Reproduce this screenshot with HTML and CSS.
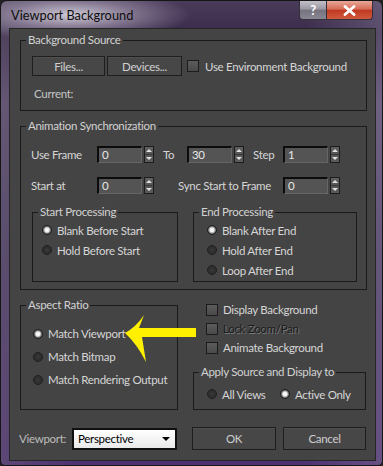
FILE: index.html
```html
<!DOCTYPE html>
<html lang="en">

<head>
    <meta charset="UTF-8">
    <meta name="viewport" content="width=device-width, initial-scale=1.0">
    <link rel="stylesheet" href="styles.css">
</head>

<body>
    <div class="window">
        <div class="titlebar">
            <span class="title">Viewport Background</span>
            <div class="caption-buttons">
                <span class="cap-btn help">?</span>
                <span class="cap-btn close">
                    <svg width="13" height="11" viewBox="0 0 13 11">
                        <path d="M2 1.5 L11 9.5 M11 1.5 L2 9.5" stroke="#fff" stroke-width="2.8" stroke-linecap="round"></path>
                    </svg>
                </span>
            </div>
        </div>

        <div class="client">
            <fieldset class="group source">
                <legend>Background Source</legend>
                <div class="source-body">
                    <div class="source-row">
                        <span class="btn files">Files...</span>
                        <span class="btn devices">Devices...</span>
                        <span class="check env"><span class="box"></span>Use Environment Background</span>
                    </div>
                    <div class="current">Current:</div>
                </div>
            </fieldset>

            <fieldset class="group anim">
                <legend>Animation Synchronization</legend>
                <div class="anim-body">
                    <div class="frame-row">
                        <span class="lbl first">Use Frame</span>
                        <span class="spin"><span class="field">0</span><span class="arrows"></span></span>
                        <span class="lbl to">To</span>
                        <span class="spin"><span class="field">30</span><span class="arrows"></span></span>
                        <span class="lbl step">Step</span>
                        <span class="spin"><span class="field">1</span><span class="arrows"></span></span>
                    </div>
                    <div class="frame-row second">
                        <span class="lbl first">Start at</span>
                        <span class="spin"><span class="field">0</span><span class="arrows"></span></span>
                        <span class="lbl sync">Sync Start to Frame</span>
                        <span class="spin"><span class="field">0</span><span class="arrows"></span></span>
                    </div>
                    <div class="processing">
                        <fieldset class="group sub start">
                            <legend>Start Processing</legend>
                            <div class="sub-body">
                                <span class="opt"><span class="radio on"></span>Blank Before Start</span>
                                <span class="opt"><span class="radio"></span>Hold Before Start</span>
                            </div>
                        </fieldset>
                        <fieldset class="group sub end">
                            <legend>End Processing</legend>
                            <div class="sub-body">
                                <span class="opt"><span class="radio on"></span>Blank After End</span>
                                <span class="opt"><span class="radio"></span>Hold After End</span>
                                <span class="opt"><span class="radio"></span>Loop After End</span>
                            </div>
                        </fieldset>
                    </div>
                </div>
            </fieldset>

            <div class="lower">
                <fieldset class="group aspect">
                    <legend>Aspect Ratio</legend>
                    <div class="aspect-body">
                        <span class="opt"><span class="radio on"></span>Match Viewport</span>
                        <span class="opt"><span class="radio"></span>Match Bitmap</span>
                        <span class="opt"><span class="radio"></span>Match Rendering Output</span>
                    </div>
                </fieldset>
                <div class="display">
                    <div class="checks">
                        <span class="check"><span class="box"></span>Display Background</span>
                        <span class="check disabled"><span class="box"></span>Lock Zoom/Pan</span>
                        <span class="check"><span class="box"></span>Animate Background</span>
                    </div>
                    <fieldset class="group apply">
                        <legend>Apply Source and Display to</legend>
                        <div class="apply-body">
                            <span class="opt all"><span class="radio"></span>All Views</span>
                            <span class="opt"><span class="radio on"></span>Active Only</span>
                        </div>
                    </fieldset>
                </div>
            </div>

            <div class="footer">
                <span class="vp-label">Viewport:</span>
                <span class="select">Perspective<span class="drop"></span></span>
                <span class="btn ok">OK</span>
                <span class="btn cancel">Cancel</span>
            </div>
        </div>

        <!-- yellow pointer drawn over the dialog -->
        <svg class="arrow" width="80" height="56" viewBox="0 0 80 56">
            <path d="M5 23 Q16 17 24 5 L19 18 L76 18 L76 27 L22 27 L26 52 Q17 34 5 23 Z" fill="#fff000"></path>
        </svg>
    </div>
</body>

</html>
```

FILE: styles.css
```css
body {
    margin: 0;
    background: #222;
    font-family: "Lato", "Liberation Sans", sans-serif;
    font-size: 11.5px;
    letter-spacing: -0.3px;
    color: #d6d6d6;
    white-space: nowrap;
}

.window {
    position: relative;
    width: 383px;
    height: 466px;
    box-sizing: border-box;
    border: 1px solid #161616;
    border-radius: 7px 7px 5px 5px;
    overflow: hidden;
    background:
        radial-gradient(ellipse 120px 26px at 70px 14px, rgba(214, 208, 220, 0.95), rgba(168, 158, 180, 0.55) 55%, rgba(0, 0, 0, 0) 100%),
        linear-gradient(90deg, rgba(120, 110, 130, 0.35) 0%, rgba(0, 0, 0, 0) 20%, rgba(0, 0, 0, 0) 80%, rgba(150, 138, 168, 0.35) 100%),
        linear-gradient(180deg, #4a3b5a 0%, #3a2b4b 7%, #5a4c6e 22%, #4b3c62 55%, #4e3271 100%);
}

/* title bar */

.titlebar {
    display: flex;
    align-items: flex-start;
    height: 27px;
    padding: 0 9px 0 10px;
}

.title {
    line-height: 28px;
    font-size: 12.8px;
    letter-spacing: 0;
    color: #0e0e0e;
}

.caption-buttons {
    display: flex;
    margin-left: auto;
}

.cap-btn {
    display: flex;
    align-items: center;
    justify-content: center;
    height: 19px;
    box-sizing: border-box;
    border: 1px solid #33303a;
    border-top: none;
}

.help {
    width: 28px;
    border-radius: 0 0 0 4px;
    background: linear-gradient(180deg, #c3c0c9 0%, #9a97a2 45%, #75727e 52%, #8a8794 100%);
    color: #fff;
    font-weight: bold;
    font-size: 13px;
}

.close {
    width: 46px;
    border-left: none;
    border-radius: 0 0 4px 0;
    background: linear-gradient(180deg, #e8a898 0%, #d66c57 45%, #c03a22 52%, #d15a3e 100%);
}

/* client area */

.client {
    margin-left: 8px;
    width: 367px;
    height: 433px;
    box-sizing: border-box;
    border: 1px solid #262626;
    background: #444444;
    padding: 4px 8px 0 10px;
}

.group {
    margin: 0;
    padding: 0;
    min-width: 0;
    box-sizing: border-box;
    border: 1px solid #1a1a1a;
}

.group legend {
    margin-left: 5px;
    padding: 0 2px;
    line-height: 14px;
    color: #d2d2d2;
}

.source {
    width: 347px;
    height: 78px;
}

.source-body {
    padding: 9px 0 0 11px;
}

.source-row {
    display: flex;
    align-items: center;
}

.btn {
    display: flex;
    align-items: center;
    justify-content: center;
    height: 20px;
    box-sizing: border-box;
    border: 1px solid #1e1e1e;
    background: #474747;
    box-shadow: inset 0 1px 0 #4f4f4f;
    color: #d0d0d0;
}

.files {
    width: 73px;
}

.devices {
    width: 75px;
    margin-left: 2px;
}

.check {
    display: flex;
    align-items: center;
    gap: 5px;
    height: 19px;
}

.check .box {
    width: 12px;
    height: 12px;
    box-sizing: border-box;
    border: 1px solid #1c1c1c;
    background: linear-gradient(180deg, #5c5c5c, #4a4a4a);
}

.env {
    margin-left: 5px;
    gap: 6px;
}

.current {
    margin-top: 11px;
    padding-left: 2px;
    line-height: 14px;
    color: #c4c4c4;
}

.anim {
    width: 347px;
    height: 171px;
    margin-top: 8px;
}

.anim-body {
    padding: 13px 0 0 10px;
}

.frame-row {
    display: flex;
    align-items: center;
    height: 17px;
}

.frame-row.second {
    margin-top: 14px;
}

.lbl.first {
    width: 66px;
}

.lbl.to {
    width: 24px;
    margin-left: 9px;
}

.lbl.step {
    width: 30px;
    margin-left: 9px;
}

.lbl.sync {
    width: 105px;
    margin-left: 24px;
}

.spin {
    display: flex;
    gap: 2px;
}

.field {
    width: 45px;
    height: 17px;
    box-sizing: border-box;
    border-style: solid;
    border-width: 2px 1px 1px 2px;
    border-color: #0c0c0c #666 #666 #0c0c0c;
    background: #545454;
    padding-left: 3px;
    line-height: 13px;
    color: #e6e6e6;
}

.arrows {
    display: flex;
    flex-direction: column;
    align-items: center;
    justify-content: space-around;
    width: 10px;
    height: 17px;
    box-sizing: border-box;
    border: 1px solid #1c1c1c;
    background: linear-gradient(180deg, #606060 0%, #555 48%, #3a3a3a 50%, #555 52%, #5a5a5a 100%);
}

.arrows::before,
.arrows::after {
    content: "";
    border-left: 3px solid transparent;
    border-right: 3px solid transparent;
}

.arrows::before {
    border-bottom: 3px solid #e0e0e0;
}

.arrows::after {
    border-top: 3px solid #e0e0e0;
}

.processing {
    display: flex;
    gap: 15px;
    margin: 11px 0 0 1px;
}

.sub {
    height: 77px;
}

.sub.start {
    width: 146px;
}

.sub.end {
    width: 164px;
}

.sub-body {
    display: flex;
    flex-direction: column;
    padding: 1px 0 0 9px;
}

.end .sub-body {
    padding-left: 13px;
}

.opt {
    display: flex;
    align-items: center;
    gap: 5px;
    height: 20px;
}

.radio {
    width: 10px;
    height: 10px;
    box-sizing: border-box;
    border-radius: 50%;
    border: 1px solid #1e1e1e;
    background: radial-gradient(circle at 50% 50%, #3a3a3a 0, #2c2c2c 60%, #4a4a4a 100%);
}

.radio.on {
    background: radial-gradient(circle at 50% 50%, #ffffff 0, #f0f0f0 2px, #9a9a9a 3px, #2a2a2a 5px);
}

/* aspect ratio + display options */

.lower {
    display: flex;
    margin-top: 8px;
}

.aspect {
    width: 158px;
    height: 112px;
}

.aspect-body {
    display: flex;
    flex-direction: column;
    padding: 10px 0 0 12px;
}

.aspect-body .opt {
    height: 23px;
}

.display {
    display: flex;
    flex-direction: column;
    justify-content: space-between;
    width: 173px;
    height: 112px;
    margin-left: 15px;
}

.checks {
    padding: 2px 0 0 13px;
}

.check.disabled {
    color: #1c1c1c;
    text-shadow: 1px 1px 0 #777;
}

.apply {
    width: 173px;
    height: 45px;
}

.apply-body {
    display: flex;
    padding: 5px 0 0 13px;
}

.opt.all {
    width: 73px;
}

/* bottom row */

.footer {
    display: flex;
    align-items: center;
    margin-top: 17px;
    height: 23px;
}

.vp-label {
    width: 53px;
    margin-left: -1px;
    color: #bdbdbd;
}

.select {
    display: flex;
    align-items: center;
    justify-content: space-between;
    width: 105px;
    height: 22px;
    box-sizing: border-box;
    border: 2px solid #101010;
    background: linear-gradient(180deg, #ffffff, #e9e9e9);
    padding: 0 5px 0 4px;
    color: #000;
}

.drop {
    border-left: 4px solid transparent;
    border-right: 4px solid transparent;
    border-top: 4px solid #000;
}

.ok {
    width: 84px;
    height: 23px;
    margin-left: 15px;
}

.cancel {
    width: 83px;
    height: 23px;
    margin-left: 7px;
}

.arrow {
    position: absolute;
    left: 119px;
    top: 309px;
}
```
